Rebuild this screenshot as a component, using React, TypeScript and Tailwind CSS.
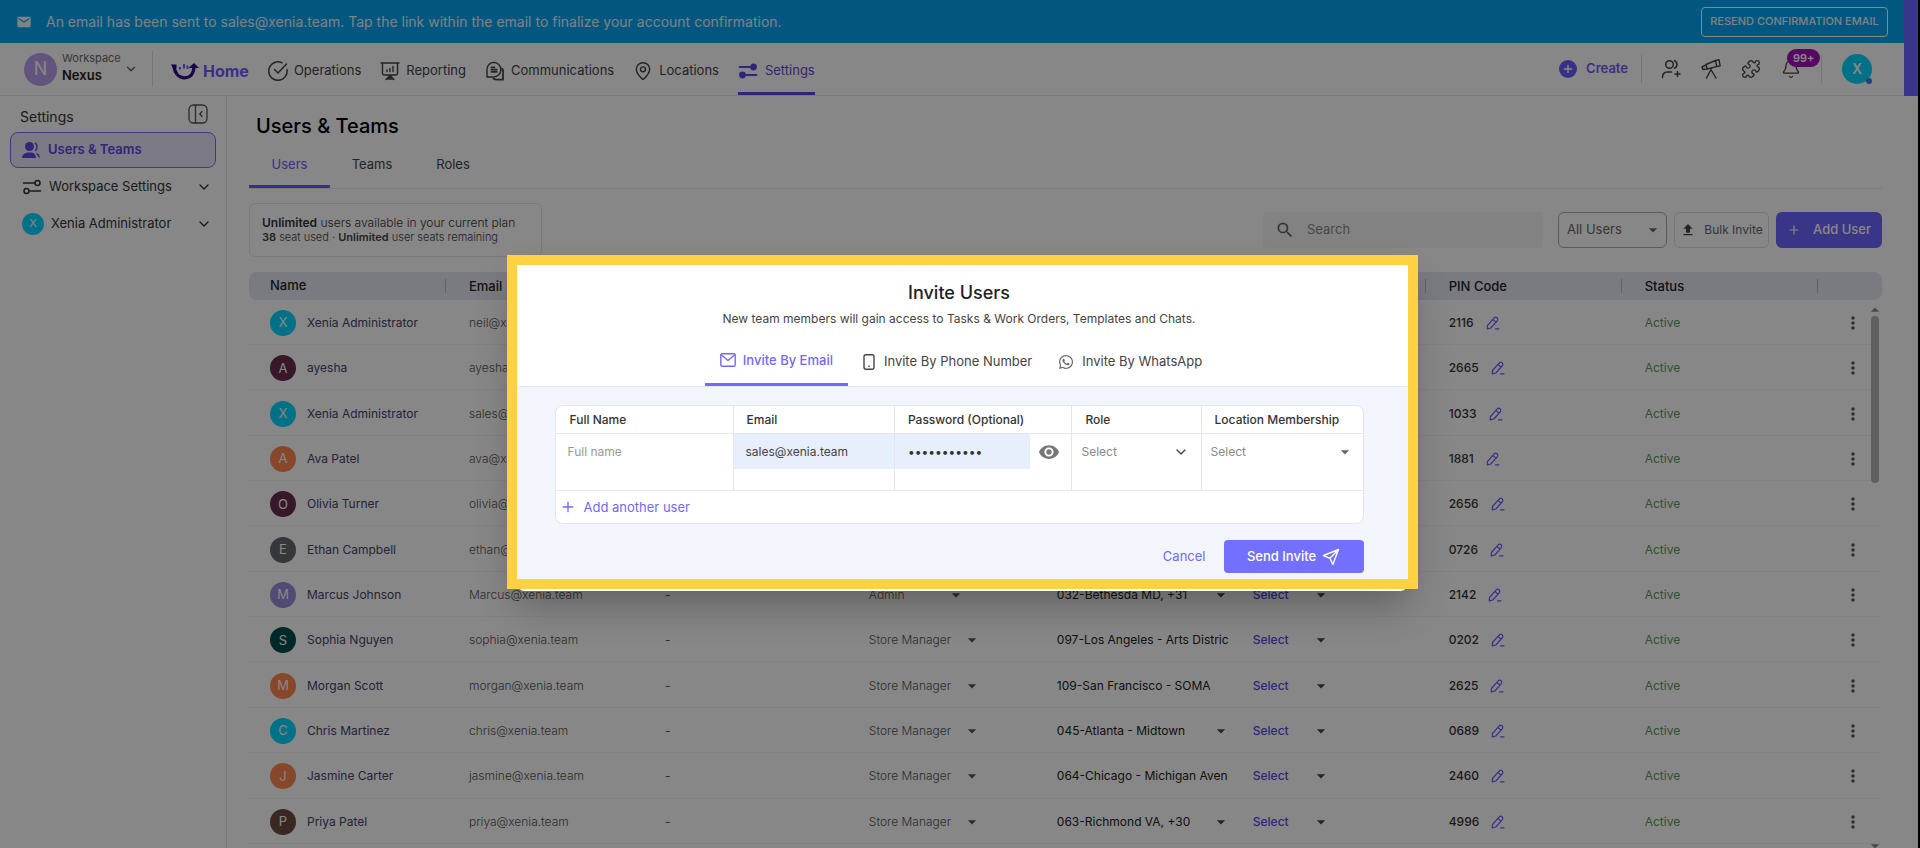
import React from "react";
import { MdEmail, MdSearch, MdArrowDropDown, MdMoreVert, MdVisibility, MdUpload } from "react-icons/md";
import { ChevronDown, Plus, MapPin, Bell, Puzzle } from "lucide-react";
import { FaWhatsapp } from "react-icons/fa";

type User = {
  name: string;
  email: string;
  color: string;
  role: string;
  location: string;
  caret?: boolean;
  pin: string;
};

const users: User[] = [
  { name: "Xenia Administrator", email: "neil@xenia.team", color: "bg-[#00d5ff]", role: "", location: "", pin: "2116" },
  { name: "ayesha", email: "ayesha@xenia.team", color: "bg-[#6b2d4d]", role: "", location: "", pin: "2665" },
  { name: "Xenia Administrator", email: "sales@xenia.team", color: "bg-[#00d5ff]", role: "", location: "", pin: "1033" },
  { name: "Ava Patel", email: "ava@xenia.team", color: "bg-[#ff8652]", role: "", location: "", pin: "1881" },
  { name: "Olivia Turner", email: "olivia@xenia.team", color: "bg-[#6b2d4d]", role: "", location: "", pin: "2656" },
  { name: "Ethan Campbell", email: "ethan@xenia.team", color: "bg-[#666870]", role: "", location: "", pin: "0726" },
  { name: "Marcus Johnson", email: "Marcus@xenia.team", color: "bg-[#9a8cdc]", role: "Admin", location: "032-Bethesda MD, +31", caret: true, pin: "2142" },
  { name: "Sophia Nguyen", email: "sophia@xenia.team", color: "bg-[#004d4d]", role: "Store Manager", location: "097-Los Angeles - Arts Distric", pin: "0202" },
  { name: "Morgan Scott", email: "morgan@xenia.team", color: "bg-[#ff8652]", role: "Store Manager", location: "109-San Francisco - SOMA", pin: "2625" },
  { name: "Chris Martinez", email: "chris@xenia.team", color: "bg-[#00d5ff]", role: "Store Manager", location: "045-Atlanta - Midtown", caret: true, pin: "0689" },
  { name: "Jasmine Carter", email: "jasmine@xenia.team", color: "bg-[#ff8652]", role: "Store Manager", location: "064-Chicago - Michigan Aven", pin: "2460" },
  { name: "Priya Patel", email: "priya@xenia.team", color: "bg-[#6d4c41]", role: "Store Manager", location: "063-Richmond VA, +30", caret: true, pin: "4996" },
];

const columns = ["Name", "Email", "", "", "", "", "PIN Code", "Status", ""];

function LogoIcon() {
  return (
    <svg viewBox="0 0 28 18" className="h-[18px] w-7" fill="none">
      <path d="M3 4c.8 7.500 5 11.800 10.500 11.800S22.500 12 23 5" stroke="#33008f" strokeWidth="3.200" />
      <path d="M0 2.500h5.500v4L1.500 5.500zM17.500 6 23 1l5 5z" fill="#33008f" />
      <path d="M9 5v2.500M13 2v4.500M16.500 3.500v3.500" stroke="#6a5cff" strokeWidth="2" />
    </svg>
  );
}

function OperationsIcon() {
  return (
    <svg viewBox="0 0 20 20" className="size-5" fill="none" stroke="currentColor" strokeWidth="1.500" strokeLinecap="round" strokeLinejoin="round">
      <path d="M14 1.800A9.200 9.200 0 1 0 19 8.500" />
      <path d="m6.500 8.500 3.500 3.500 8.500-9" />
    </svg>
  );
}

function ReportingIcon() {
  return (
    <svg viewBox="0 0 20 20" className="size-5" fill="none" stroke="currentColor" strokeWidth="1.400" strokeLinecap="round">
      <path d="M1 2h18M2.500 2v10.500a1.500 1.500 0 0 0 1.500 1.500h12a1.500 1.500 0 0 0 1.500-1.500V2M10 14v4M10 14.500 6 18.500M10 14.500l4 4M7 18h6" />
      <path d="M7 10.500V9M10 10.500V7.500M13 10.500V5.500" />
    </svg>
  );
}

function CommsIcon() {
  return (
    <svg viewBox="0 0 22 22" className="size-5" fill="none" stroke="currentColor" strokeWidth="1.600" strokeLinecap="round" strokeLinejoin="round">
      <path d="M9.500 1.500a8 8 0 0 1 0 16H2.200V9A7.500 7.500 0 0 1 9.500 1.500z" />
      <path d="M19 8.500a8 8 0 0 1 .8 6v6H13a7 7 0 0 1-3.500-1" strokeWidth="2" />
      <path d="M7 7h3.500M7 9.500h6M7 12h6" strokeWidth="1.800" />
    </svg>
  );
}

function SlidersIcon({ filled = false }: { filled?: boolean }) {
  return (
    <svg viewBox="0 0 20 16" className="h-4 w-5" fill={filled ? "currentColor" : "none"} stroke="currentColor" strokeWidth={filled ? 1.8 : 1.5} strokeLinecap="round">
      <path d="M1.500 4H13M8 12h10.500" />
      <circle cx="15.500" cy="4" r="2.500" />
      <circle cx="4.500" cy="12" r="2.500" />
    </svg>
  );
}

function AddUserIcon() {
  return (
    <svg viewBox="0 0 20 20" className="size-5" fill="none" stroke="currentColor" strokeWidth="1.500" strokeLinecap="round">
      <circle cx="8.500" cy="5.500" r="3.800" />
      <path d="M13.500 1.800a4 4 0 0 1 0 7.400M1.500 18.500c0-4 2-5.500 5-5.500h4M16.500 12.500v5M14 15h5" />
    </svg>
  );
}

function TelescopeIcon() {
  return (
    <svg viewBox="0 0 20 20" className="size-5" fill="none" stroke="currentColor" strokeWidth="1.400" strokeLinecap="round" strokeLinejoin="round">
      <path d="M14.500 1.500 18 .8l1.200 6-3.500.8zM14.500 1.500 5 5.500l1.200 4.500 9.500-2.400M5 6 1 8l.8 2.500L6.200 10" />
      <path d="M9.500 11.500 5.500 19M10.500 11.500l4.500 7.500M10 9.500v2" />
    </svg>
  );
}

function UsersIcon() {
  return (
    <svg viewBox="0 0 18 16" className="h-4 w-[18px]" fill="currentColor">
      <circle cx="7.500" cy="4.500" r="4.500" />
      <path d="M0 16c0-3.500 3-5.500 7.500-5.500S14 12.500 14 16z" />
      <path d="M13 1c2.800 1.200 2.800 6.300 0 7.500M14.500 11.500c1.500.6 2.500 2 2.800 4" fill="none" stroke="currentColor" strokeWidth="1.400" />
    </svg>
  );
}

function CollapseIcon() {
  return (
    <svg viewBox="0 0 20 20" className="size-5" fill="none" stroke="currentColor" strokeWidth="1.300" strokeLinecap="round" strokeLinejoin="round">
      <rect x="1" y="1" width="18" height="18" rx="4.500" />
      <path d="M7.500 1v18M14 7.500 11.800 10l2.200 2.500" />
    </svg>
  );
}

function EditIcon() {
  return (
    <svg viewBox="0 0 14 14" className="size-3.5" fill="none" stroke="currentColor" strokeWidth="1.200" strokeLinecap="round" strokeLinejoin="round">
      <path d="M1.200 12.800 1.500 9.500 8 2.200c.8-1 2-1.200 3-.4s1 2 .2 3L4.800 12z M7 3.500l3 2.600M9.500 12.800h3.500" />
    </svg>
  );
}

function MailOutline() {
  return (
    <svg viewBox="0 0 16 14" className="h-3.5 w-4" fill="none" stroke="currentColor" strokeWidth="1.400" strokeLinejoin="round">
      <rect x="0.800" y="0.800" width="14.400" height="12.400" rx="1.200" />
      <path d="M1.500 2 8 7.500 14.500 2" />
    </svg>
  );
}

function PhoneIcon() {
  return (
    <svg viewBox="0 0 12 16" className="h-4 w-3" fill="none" stroke="currentColor" strokeWidth="1.400">
      <rect x="1" y="0.800" width="10" height="14.400" rx="1.600" />
      <path d="M6 11.500v1.500" />
    </svg>
  );
}

function SendIcon() {
  return (
    <svg viewBox="0 0 18 18" className="size-[18px]" fill="none" stroke="currentColor" strokeWidth="1.400" strokeLinejoin="round">
      <path d="M16.500 1.500 1.500 7.500l6.500 2.800 2.800 6.200zM16.500 1.500 8 10.300" />
    </svg>
  );
}

const navItems = [
  { label: "Operations", icon: <OperationsIcon /> },
  { label: "Reporting", icon: <ReportingIcon /> },
  { label: "Communications", icon: <CommsIcon /> },
  { label: "Locations", icon: <MapPin className="size-5" strokeWidth={1.7} /> },
];

function Banner() {
  return (
    <div className="flex h-[43px] items-center gap-3.5 bg-[#03a4f0] px-4 text-[#f0f4f8]">
      <MdEmail className="size-4 shrink-0" />
      <p className="flex-1 text-sm">
        An email has been sent to sales@xenia.team. Tap the link within the email to finalize your account confirmation.
      </p>
      <button type="button" className="h-[30px] w-[187px] rounded border border-white text-[11px] font-medium whitespace-nowrap">
        RESEND CONFIRMATION EMAIL
      </button>
    </div>
  );
}

function Header() {
  return (
    <header className="flex h-[53px] items-center border-b border-[#e4e4e8] pr-8 pl-6">
      <button type="button" className="flex items-center gap-[5px] text-left">
        <span className="flex size-[33px] items-center justify-center rounded-full bg-[#bb9ff0] text-lg text-white">N</span>
        <span className="flex w-[57px] flex-col pb-1 leading-[17px]">
          <span className="text-[11px] text-[#666]">Workspace</span>
          <span className="text-[13px] font-semibold text-[#222]">Nexus</span>
        </span>
        <ChevronDown className="size-3.5 text-[#555]" />
      </button>
      <div className="ml-[14px] h-9 w-px bg-[#dcdce2]" />
      <nav className="ml-[18px] flex h-full items-center gap-[19px] text-[13px] text-[#444]">
        <a href="#home" className="flex h-full items-center gap-1 pt-[3px] text-base font-bold text-[#6a5cff]">
          <LogoIcon />
          Home
        </a>
        {navItems.map((item) => (
          <a key={item.label} href="#nav" className="flex h-full items-center gap-1.5 pt-[3px]">
            {item.icon}
            {item.label}
          </a>
        ))}
        <a href="#settings" className="flex h-full items-center gap-[7px] border-b-3 border-[#5b48e0] pt-1.5 text-[#5b48e0]">
          <SlidersIcon filled />
          Settings
        </a>
      </nav>
      <div className="ml-auto flex items-center text-[#444]">
        <button type="button" className="flex items-center gap-[9px] text-[13px] font-semibold text-[#6a5cff]">
          <span className="flex size-[18px] items-center justify-center rounded-full bg-[#6a5cff] text-white">
            <Plus className="size-3" strokeWidth={3} />
          </span>
          Create
        </button>
        <div className="mr-[19px] ml-[13px] h-7 w-px bg-[#dcdce2]" />
        <div className="flex items-center gap-5">
          <button type="button" aria-label="Add user"><AddUserIcon /></button>
          <button type="button" aria-label="Explore"><TelescopeIcon /></button>
          <button type="button" aria-label="Integrations"><Puzzle className="size-5" strokeWidth={1.6} /></button>
          <button type="button" aria-label="Notifications" className="relative">
            <Bell className="size-5" strokeWidth={1.6} />
            <span className="absolute -top-2.5 left-1.5 rounded-full bg-[#a312b5] px-1.5 text-[11px] leading-[18px] font-semibold text-white">99+</span>
          </button>
        </div>
        <div className="mx-5 h-7 w-px bg-[#dcdce2]" />
        <button type="button" className="relative flex size-[30px] items-center justify-center rounded-full bg-[#00d5ff] text-sm font-semibold text-white">
          X
          <span className="absolute right-0 bottom-0 size-1.5 rounded-full bg-[#3d7bf5]" />
        </button>
      </div>
    </header>
  );
}

function Sidebar() {
  return (
    <aside className="w-[227px] shrink-0 border-r border-[#e4e4e8] px-[10px] pt-2 text-[13px] text-[#333]">
      <div className="flex h-7 items-start justify-between pr-2 pl-[10px] text-sm leading-[26px]">
        Settings
        <button type="button" aria-label="Collapse sidebar" className="text-[#555]"><CollapseIcon /></button>
      </div>
      <a href="#users" className="flex h-9 items-center gap-2 rounded-lg border border-[#7b6cff] bg-[#ebe6fb] px-[11px] font-semibold text-[#5b48e0]">
        <UsersIcon />
        Users &amp; Teams
      </a>
      <a href="#workspace" className="flex h-[37px] items-center gap-[7px] pr-1 pl-3">
        <SlidersIcon />
        <span className="flex-1">Workspace Settings</span>
        <ChevronDown className="size-4" />
      </a>
      <a href="#admin" className="flex h-[37px] items-center gap-[7px] pr-1 pl-3">
        <span className="flex size-[22px] items-center justify-center rounded-full bg-[#00d5ff] text-[11px] text-white">X</span>
        <span className="flex-1">Xenia Administrator</span>
        <ChevronDown className="size-4" />
      </a>
    </aside>
  );
}

function Toolbar() {
  return (
    <div className="flex items-center justify-between pt-[14px]">
      <div className="h-[54px] w-[293px] rounded-md border border-[#e6e6ea] px-3 py-[11px] text-xs leading-[15px] font-light text-[#333]">
        <p><b className="font-semibold">Unlimited</b> users available in your current plan</p>
        <p className="text-[11px] text-[#444]"><b className="font-semibold">38</b> seat used · <b className="font-semibold">Unlimited</b> user seats remaining</p>
      </div>
      <div className="flex items-center gap-[7px] text-[13px] text-[#666]">
        <label className="mr-2 flex h-9 w-[280px] items-center gap-3 rounded bg-[#f6f6f6] px-3">
          <MdSearch className="size-5 shrink-0" />
          <input type="text" aria-label="Search" placeholder="Search" className="w-full bg-transparent outline-none placeholder:text-[#888]" />
        </label>
        <div className="relative flex items-center">
          <select aria-label="Filter users" className="h-9 w-[109px] appearance-none rounded-md border border-[#aaa] pl-2 outline-none">
            <option>All Users</option>
          </select>
          <MdArrowDropDown className="pointer-events-none absolute right-1 size-5" />
        </div>
        <button type="button" className="flex h-9 w-[95px] items-center justify-center gap-2 rounded-md border border-[#dcdce2] text-xs">
          <MdUpload className="size-4 text-[#444]" />
          Bulk Invite
        </button>
        <button type="button" className="flex h-9 w-[106px] items-center justify-center gap-3 rounded-md bg-[#6f66ff] font-medium text-white">
          <Plus className="size-3.5" />
          Add User
        </button>
      </div>
    </div>
  );
}

function UserRow({ user }: { user: User }) {
  return (
    <tr className="border-b border-[#f3f3f6] *:pt-0.5">
      <td className="pl-[21px]">
        <div className="flex items-center gap-[11px] text-[#44446c]">
          <span className={`flex size-[26px] shrink-0 items-center justify-center rounded-full text-[13px] text-white ${user.color}`}>
            {user.name[0].toUpperCase()}
          </span>
          {user.name}
        </div>
      </td>
      <td className="pl-6 font-light">{user.email}</td>
      <td className="pl-6">{user.role && "-"}</td>
      <td className="pl-8">
        {user.role && (
          <button type="button" className="flex items-center">
            <span className="min-w-[66px] text-left font-light">{user.role}</span>
            <MdArrowDropDown className="ml-[11px] size-5" />
          </button>
        )}
      </td>
      <td className="pl-6 text-[#222]">
        <div className="flex w-[174px] items-center justify-between overflow-hidden whitespace-nowrap">
          {user.location}
          {user.caret && <MdArrowDropDown className="size-5 shrink-0 text-[#444]" />}
        </div>
      </td>
      <td className="pl-6">
        {user.role && (
          <button type="button" className="flex items-center gap-[22px] font-medium text-[#5b48e0]">
            Select
            <MdArrowDropDown className="size-5 text-[#444]" />
          </button>
        )}
      </td>
      <td className="pl-6">
        <div className="flex items-center gap-3 font-medium text-[#333]">
          {user.pin}
          <button type="button" aria-label="Edit PIN" className="text-[#6a5cff]"><EditIcon /></button>
        </div>
      </td>
      <td className="pl-6 text-[#5c9a60]">Active</td>
      <td>
        <button type="button" aria-label="More" className="ml-[26px] block"><MdMoreVert className="size-5" /></button>
      </td>
    </tr>
  );
}

function UsersTable() {
  return (
    <div className="relative mt-[15px] min-h-0 flex-1 pb-1">
      <table className="h-full w-full table-fixed text-xs text-[#555]">
        <colgroup>
          {columns.map((col, i) => (
            <col key={i} className={i < 8 ? "w-[12%]" : "w-[4%]"} />
          ))}
        </colgroup>
        <thead>
          <tr className="h-7 text-left text-[13px] text-[#222]">
            {columns.map((col, i) => (
              <th key={i} className="bg-[#e6e8f4] p-0 font-medium first:rounded-l-lg last:rounded-r-lg">
                <div className={i === 0 ? "pl-[21px]" : "h-3.5 border-l border-[#bbb] pl-[23px] leading-[14px]"}>{col}</div>
              </th>
            ))}
          </tr>
        </thead>
        <tbody>
          {users.map((user, i) => (
            <UserRow key={i} user={user} />
          ))}
        </tbody>
      </table>
      <div className="absolute top-7 right-[3px] bottom-0 flex w-2 flex-col items-center">
        <MdArrowDropDown className="size-5 shrink-0 rotate-180 text-[#888]" />
        <div className="-mt-1 h-[167px] w-2 rounded-full bg-[#b5b5b5]" />
        <MdArrowDropDown className="mt-auto -mb-2 size-5 shrink-0 text-[#888]" />
      </div>
    </div>
  );
}

function InviteModal() {
  return (
    <div role="dialog" aria-labelledby="invite-title" className="relative w-[911px]">
      <div className="absolute inset-x-[10px] top-4 -bottom-0.5 rounded-lg bg-white shadow-[0_12px_40px_rgba(0,0,0,0.3)]" />
      <div className="relative border-[10px] border-[#ffd143] bg-white text-[13px] text-[#444]">
        <div className="flex flex-col items-center border-b border-[#e8e8ec] pt-4 pr-1.5">
          <h2 id="invite-title" className="text-lg leading-6 font-medium text-[#222]">Invite Users</h2>
          <p className="mt-[3px] text-xs leading-[22px]">New team members will gain access to Tasks &amp; Work Orders, Templates and Chats.</p>
          <div className="mt-2 flex h-12">
            <button type="button" className="flex items-center gap-[7px] border-b-3 border-[#7468ff] px-[15px] font-medium text-[#7468ff]">
              <MailOutline />
              Invite By Email
            </button>
            <button type="button" className="flex items-center gap-[9px] px-[15px]"><PhoneIcon />Invite By Phone Number</button>
            <button type="button" className="flex items-center gap-2 px-[11px]"><FaWhatsapp className="size-4 text-[#666]" />Invite By WhatsApp</button>
          </div>
        </div>
        <div className="bg-[#f2f5fb] pt-[18px] pr-11 pb-1.5 pl-[38px]">
          <div className="overflow-hidden rounded-lg border border-[#e6e6ea] bg-white">
            <table className="w-full table-fixed text-left">
              <thead>
                <tr className="h-7 border-b border-[#e6e6ea] text-xs text-[#333]">
                  <th className="w-[22%] pl-[14px] font-medium">Full Name</th>
                  <th className="w-[20%] border-l border-[#e6e6ea] pl-[13px] font-medium">Email</th>
                  <th className="w-[22%] border-l border-[#e6e6ea] pl-[13px] font-medium">Password (Optional)</th>
                  <th className="w-[16%] border-l border-[#e6e6ea] pl-[13px] font-medium">Role</th>
                  <th className="border-l border-[#e6e6ea] pl-[13px] font-medium">Location Membership</th>
                </tr>
              </thead>
              <tbody>
                <tr className="h-[57px] border-b border-[#e6e6ea] align-top text-xs">
                  <td><input type="text" aria-label="Full name" placeholder="Full name" className="h-[35px] w-full pl-3 outline-none placeholder:text-[#999]" /></td>
                  <td className="border-l border-[#e6e6ea]">
                    <input type="email" aria-label="Email" defaultValue="sales@xenia.team" className="block h-[35px] w-full bg-[#e8effc] pl-3 outline-none" />
                  </td>
                  <td className="border-l border-[#e6e6ea]">
                    <div className="flex items-center">
                      <input type="password" aria-label="Password" defaultValue="xeniateam12" className="h-[35px] w-[135px] bg-[#e8effc] pl-[13px] text-[#333] outline-none" />
                      <button type="button" aria-label="Show password" className="ml-2 text-[#777]"><MdVisibility className="size-[22px]" /></button>
                    </div>
                  </td>
                  <td className="border-l border-[#e6e6ea]">
                    <div className="relative flex h-[35px] items-center">
                      <select aria-label="Role" className="h-full w-full appearance-none pl-[9px] text-[#888] outline-none"><option>Select</option></select>
                      <ChevronDown className="pointer-events-none absolute right-3 size-4" />
                    </div>
                  </td>
                  <td className="border-l border-[#e6e6ea]">
                    <div className="relative flex h-[35px] items-center">
                      <select aria-label="Location membership" className="h-full w-full appearance-none pl-[9px] text-[#888] outline-none"><option>Select</option></select>
                      <MdArrowDropDown className="pointer-events-none absolute right-2 size-5 text-[#666]" />
                    </div>
                  </td>
                </tr>
              </tbody>
            </table>
            <button type="button" className="flex h-8 items-center gap-2 px-1 text-[#7468ff]">
              <Plus className="size-4" />
              Add another user
            </button>
          </div>
          <div className="mt-4 flex items-center justify-end gap-[18px]">
            <button type="button" className="text-[#7468ff]">Cancel</button>
            <button type="button" className="flex h-[33px] w-[140px] items-center justify-center gap-1.5 rounded bg-[#7370ff] font-medium text-white">
              Send Invite
              <SendIcon />
            </button>
          </div>
        </div>
      </div>
    </div>
  );
}

export default function App() {
  return (
    <div className="relative h-screen overflow-hidden bg-black pr-0.5 font-['Inter',sans-serif]">
      <div className="flex h-full flex-col bg-white">
        <div className="flex">
          <div className="min-w-0 flex-1">
            <Banner />
            <Header />
          </div>
          <div className="w-[14px] bg-[#6f66ff]" />
        </div>
        <div className="flex min-h-0 flex-1">
          <Sidebar />
          <main className="flex min-w-0 flex-1 flex-col pr-9 pl-[22px]">
            <h1 className="mt-4 pl-[7px] text-xl leading-7 font-medium text-black">Users &amp; Teams</h1>
            <div className="mt-[5px] flex h-11 border-b border-[#eaeaee] text-[13px] text-[#444]">
              <button type="button" className="w-[81px] border-b-3 border-[#6a5cff] text-[#6a5cff]">Users</button>
              <button type="button" className="w-[84px] pb-[3px]">Teams</button>
              <button type="button" className="w-[78px] pb-[3px]">Roles</button>
            </div>
            <Toolbar />
            <UsersTable />
          </main>
        </div>
      </div>
      <div className="absolute inset-0 flex items-center justify-center bg-black/47 pb-1 pl-1">
        <InviteModal />
      </div>
    </div>
  );
}
